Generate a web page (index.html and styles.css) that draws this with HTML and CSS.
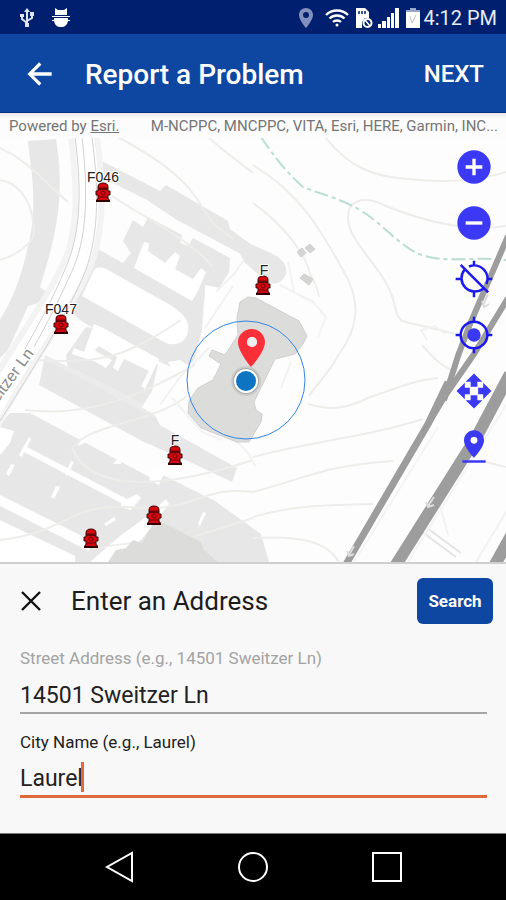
FILE: index.html
```
<!DOCTYPE html>
<html lang="en">
<head>
    <meta charset="UTF-8">
    <meta name="viewport" content="width=device-width, initial-scale=1.0">
    <title>Report a Problem</title>
    <link rel="stylesheet" href="styles.css">
</head>
<body>
    <div class="status-bar">
        <div class="status-group notifications">
            <svg width="14" height="20" viewBox="0 0 14 20" fill="none" stroke="#dfe4f5" stroke-width="2">
                <path d="M7 3v13M2 8v3l5 4M12 6v4l-5 3"/>
                <path d="M4 4l3-4 3 4zM5 15h4v4H5zM0 6h4v3H0zM10 4h4v4h-4z" fill="#dfe4f5" stroke="none"/>
            </svg>
            <svg width="20" height="20" viewBox="0 0 20 20" fill="#fff">
                <path d="M4 0l3 2h6l3-2v7H4zM1 8h18v1H1zM3 10h14v2h2v1h-2c-1 4-3 6-7 6s-6-2-7-6H1v-1h2z"/>
            </svg>
        </div>
        <div class="status-group">
            <svg class="location" width="14" height="20" viewBox="0 0 14 20" fill="#8290bd">
                <path fill-rule="evenodd" d="M7 0C3 0 0 3 0 7c0 5 7 13 7 13s7-8 7-13c0-4-3-7-7-7zm0 4a3 3 0 1 1 0 6 3 3 0 0 1 0-6z"/>
            </svg>
            <svg class="wifi" width="24" height="18" viewBox="0 0 24 18" fill="none" stroke="#fff" stroke-width="2.4">
                <path d="M1 6C7 0 17 0 23 6M4.500 9.500c4-4 11-4 15 0M8 13c2-2 6-2 8 0"/>
                <circle cx="12" cy="16" r="1.500" fill="#fff" stroke="none"/>
            </svg>
            <svg class="sim" width="17" height="20" viewBox="0 0 17 20">
                <path fill="#fff" d="M0 0h9l4 4v6H9l-3 4v6H0z"/>
                <path stroke="#00206f" stroke-width="1.500" d="M3 3v3M6 3v3M9 3v3"/>
                <circle cx="11.500" cy="15" r="4" fill="none" stroke="#fff" stroke-width="2"/>
                <path stroke="#fff" stroke-width="1.500" d="M9 12l5 6"/>
            </svg>
            <svg class="signal" width="21" height="20" viewBox="0 0 21 20" fill="#fff">
                <path d="M0 16h3v4H0zM4 13h4v7H4zM9 9h3v11H9zM13 5h3v15h-3zM17 0h4v20h-4z"/>
            </svg>
            <svg class="battery" width="14" height="20" viewBox="0 0 14 20">
                <path fill="#9aa6cc" d="M4 0h6v2h4v3H0V2h4z"/>
                <path fill="#fff" d="M0 4h14v16H0z"/>
                <path fill="none" stroke="#c9c4b8" d="M4 8l2 7 4-8"/>
            </svg>
            <span class="clock">4:12 PM</span>
        </div>
    </div>

    <header class="app-bar">
        <button class="back-btn" aria-label="Back">
            <svg width="40" height="40" viewBox="0 0 24 24" fill="#fff">
                <path d="M19 11H8.200l4.600-4.600L11.500 5l-7 7 7 7 1.300-1.400L8.200 13H19z"/>
            </svg>
        </button>
        <h1>Report a Problem</h1>
        <button class="next-btn">NEXT</button>
    </header>

    <main class="map">
        <svg class="map-canvas" viewBox="0 113 506 449" preserveAspectRatio="xMidYMin slice">
            <defs>
                <g id="hydrant">
                    <path fill="#d5070f" stroke="#3b0a0a" d="M-5-5c0-3 2-4 5-4s5 1 5 4v2H-5zM-7-1h2v-2H5v2h2v4H5v4h1v2H-6V7h1V3h-2z"/>
                    <path stroke="#300" stroke-width="2" d="M-7 9H7"/>
                    <path stroke="#6d0508" d="M-5-4H5M-5 5H5"/>
                    <circle cy="1" r="2" fill="none" stroke="#6d0508"/>
                </g>
            </defs>

            <!-- parking lots and side roads -->
            <g fill="#e7e7e7">
                <path d="M28 141l28-2c4 26 6 52 0 86-4 24-10 42-16 62l8 6-10 10-10 3-20 44-8 8v-38c16-26 24-52 31-88 5-30 1-60-3-89z"/>
                <path d="M100 160l60 31 6-6 62 36 2 8 23 17v12l-7 4-7-9-62-33-30-20-44-22z"/>
                <path d="M90 254l6-6 27 15 8-10-8-12 10-21 10 7 5-10 34 18-2 8 8 3 5-8 37 20-1 14-12 20-13 8-2 30-8 30-12 12-70-32-32-20-8-8 14-38z"/>
                <path d="M45 355l60 31 50 29 5 10 77 43-5 14-42-20-46-20-105-57z"/>
                <path d="M66 355l20-28 14 2 58 36-6 26-10 16-40-20-34-18z"/>
                <path d="M10 413h20l125 67 6-6 54 27 46 33 8 28H0V425z"/>
                <path d="M237 238l38 17c9 5 14 14 10 21-4 8-12 9-18 6l-24-21z"/>
            </g>
            <g fill="#fff">
                <path d="M134 268l10-26 5 1-1 8 17 12 10-11 5 4-5 13 18 10 8-11 5 4-8 19-6 10z"/>
                <path d="M82 296l12-26c4-4 8-3 14 0l64 36c12 8 18 16 16 26-3 12-14 14-22 11z"/>
                <path d="M84 352l10-28 6 2-10 22 22 12-6 8-10-6-24-8 2-6z"/>
                <path d="M97 329c3-3 5-2 8 0l54 30-14 30-4-3 8-15-25-12-6 12-5-3 4-11-18-11-8 8-3-4z"/>
                <path d="M205 285l15 3-6 28-10 14zM168 362l12-2 12 8-14 24-10-4 6-16z"/>
                <path d="M42 358l6-2 62 30 48 26-4 6-50-28z" opacity=".2"/>
                <path d="M19 455l10-18 2 2-4 8 100 52 10-5 4 4-10 12-10-3v-4l-97-51-2 5z"/>
                <path d="M65 474l6-13 3 1-7 14zM51 497l5-11 4 1-6 12zM6 474l5-10 4 1-6 11zM104 524l10-7 2 3-10 6z"/>
                <path d="M0 495l80 40 10 8-1 8-89-45z"/>
                <path d="M0 520l75 36v6H0zM90 562l30-26 30-22 16-15 3 5-27 35-22 18-4 5zM0 427l14 4-4 12-10 12zM149 480l6-14 10 5-6 14zM77 446l7-10 1 7zM113 464l7-8 1 8zM198 524l5-12 3 1-6 13z"/>
            </g>

            <!-- contour lines -->
            <g fill="none" stroke="#efede9" stroke-width="2">
                <path d="M0 148c30 14 40 30 68 54M0 180c24 4 34 30 34 52 0 12-20 24-34 28M118 137c40 22 70 42 85 72 10 16 20 22 30 30M112 196c30 20 80 45 100 70M208 137c18 16 30 24 45 36"/>
                <path d="M325 137c24 30 48 40 84 42 34 4 70 2 97-7M253 165c50 30 70 70 90 105 20 34 14 60-4 84-8 16-22 30-30 42M253 203c30 22 48 46 56 66 0 10 8 12 10 28M348 216c0-14 14-22 38-10 40 16 80 26 120 20M348 216c-2 24 34 50 44 80 5 16 4 24 14 26l50 12"/>
                <path d="M308 404c20 6 36 6 60-6 24-8 46-18 70-20M253 457c60-16 114-20 170-38M253 492c60-16 70-26 140-31M253 517c40-12 76-12 120-13M253 538c38-2 72 0 86 24M422 345c14 16 22 24 40 28M486 462l20 5"/>
                <path d="M36 360c70 4 90-4 145-40M25 410c70 8 120-18 170-45M72 448c20-26 80-24 115-52M72 448c18 44 90 42 181 12M0 540c70-8 70-40 140-32 60 2 60-22 113-16M100 548c40-10 60 0 90-10l63-20"/>
            </g>
            <path fill="none" stroke="#f2f2f2" stroke-width="2" d="M253 288l12-18M216 292l18-18 10-14M205 328l28-42M160 405l20-28 30-30M172 398l30 34 20 8M195 420c30 16 50 20 60 46M280 285l34 18 12 14-8 20M288 262l6 30 20 10M291 362l-10 26M427 340l-6-10 14-4 10 8M422 520l-14 22M440 505l8 30M506 512l-30 50"/>
            <path fill="none" stroke="#e4e4e4" stroke-width="2" d="M422 532l34 25M427 528l34 25"/>

            <!-- Sweitzer Ln -->
            <g fill="none">
                <path stroke="#f3f3f3" stroke-width="32" d="M84 137c8 60 6 104-10 134-20 44-60 92-88 150"/>
                <path stroke="#fff" stroke-width="20" d="M84 137c8 60 6 104-10 134-20 44-60 92-88 150"/>
                <path stroke="#d2d2d2" d="M75 137c8 60 4 100-9 130-14 34-28 58-41 82M82 137c7 60 4 104-10 134-16 36-26 54-38 76M92 137c8 60 6 104-9 140-20 44-40 76-83 144"/>
            </g>
            <text class="street-label" transform="translate(-15 421) rotate(-54)">Sweitzer Ln</text>

            <!-- creek -->
            <path fill="none" stroke="#b9ddd3" stroke-width="2" stroke-dasharray="14 4 4 4" d="M261 137c12 18 24 34 42 50 20 8 40 12 60 25 20 12 34 32 56 42 24 10 56 2 87 6"/>

            <!-- highway -->
            <g fill="none" stroke="#9d9d9d">
                <path stroke-width="6" d="M508 236l-38 88-12 32-14 44"/>
                <path stroke-width="6" d="M508 298l-34 56-29 42-18 30"/>
                <path stroke-width="7" d="M448 382l-20 42-83 142"/>
                <path stroke-width="12" d="M510 374l-34 64-82 130"/>
                <path stroke-width="12" d="M512 534l-20 36"/>
                <path stroke="#f4f4f4" stroke-width="2" d="M438 427l-84 135M506 405l-98 157"/>
            </g>
            <g fill="none" stroke="#dcdcdc" stroke-width="2">
                <path d="M434 497l-6 9M426 502l2 5 6-2M354 546l-5 9M347 551l2 5 5-2M488 294l-5 12M482 301l2 6 5-3"/>
            </g>

            <!-- buildings -->
            <g fill="#dcdddb" stroke="#cfcfcf">
                <path d="M240 302l8-5 8 1 43 23 8 15-4 8-8 10-20 5-21 43 2 8 6 4-1 8-12 20-12 0-36-14-13-15 1-12 9-13 15-8 8-16-12-8 3-6 13 5 13-20-1-17z"/>
                <path stroke="none" d="M108 562l8-12 10-2 7-8 9 3 14-24 45 23 3 8 14 12z"/>
                <path fill="#d4d4d2" d="M297 252l5-4 4 5-5 4zM305 248l5-4 5 5-5 4zM300 278l4-4 9 5-4 6z"/>
            </g>

            <g class="hydrants">
                <use href="#hydrant" x="103" y="192"/>
                <use href="#hydrant" x="61" y="324"/>
                <use href="#hydrant" x="263" y="285"/>
                <use href="#hydrant" x="175" y="455"/>
                <use href="#hydrant" x="154" y="515"/>
                <use href="#hydrant" x="91" y="538"/>
            </g>
            <g class="hydrant-label">
                <text x="103" y="182">F046</text>
                <text x="61" y="314">F047</text>
                <text x="264" y="275">F</text>
                <text x="175" y="445">F</text>
            </g>

            <!-- current position -->
            <circle cx="246" cy="380" r="59" fill="none" stroke="#3385e6"/>
            <circle cx="246" cy="381" r="15" fill="#000" opacity=".08"/>
            <circle cx="246" cy="381" r="13" fill="#000" opacity=".16"/>
            <circle cx="246" cy="381" r="11" fill="#0d74c2" stroke="#fff" stroke-width="2"/>
            <path fill="#fa2f38" fill-rule="evenodd" d="M252 329c-8 0-14 6-14 13 0 10 13 25 13 25s14-15 14-25c0-7-6-13-13-13zm0 8a5 5 0 1 1 0 10 5 5 0 0 1 0-10z"/>
            <circle cx="252" cy="342" r="5" fill="#eee"/>
        </svg>

        <div class="attribution">
            <span>Powered by <a href="#">Esri.</a></span>
            <span class="sources">M-NCPPC, MNCPPC, VITA, Esri, HERE, Garmin, INC...</span>
        </div>

        <div class="map-controls">
            <button aria-label="Zoom in">
                <svg viewBox="0 0 24 24"><circle cx="12" cy="12" r="10"/><path d="M12 7v10M7 12h10" stroke="#fff" stroke-width="2"/></svg>
            </button>
            <button aria-label="Zoom out">
                <svg viewBox="0 0 24 24"><circle cx="12" cy="12" r="10"/><path d="M7 12h10" stroke="#fff" stroke-width="2"/></svg>
            </button>
            <button aria-label="Location off">
                <svg class="outline" viewBox="0 0 24 24"><path d="M9 4.500A8 8 0 0 1 19.500 15M17.500 17.800A8 8 0 0 1 6.300 6.500M4 3.500l16.500 16.500M12 1v3M12 20v3M1 12h3M20 12h3"/></svg>
            </button>
            <button aria-label="My location">
                <svg class="outline" viewBox="0 0 24 24"><circle cx="12" cy="12" r="8"/><path d="M12 1v3M12 20v3M1 12h3M20 12h3"/><circle class="dot" cx="12" cy="12" r="4"/></svg>
            </button>
            <button aria-label="Pan">
                <svg viewBox="0 0 24 24"><path d="M12 1.500l5 5h-3v3h-4v-3H7zM12 22.500l5-5h-3v-3h-4v3H7zM1.500 12l5-5v3h3v4h-3v3zM22.500 12l-5-5v3h-3v4h3v3z"/></svg>
            </button>
            <button aria-label="Drop pin">
                <svg viewBox="0 0 24 24"><path fill-rule="evenodd" d="M18 8c0-3.300-2.700-6-6-6S6 4.700 6 8c0 4.500 6 10.500 6 10.500S18 12.500 18 8zm-8 0a2 2 0 1 1 4 0 2 2 0 0 1-4 0zM5 20h14v1.500H5z"/><circle cx="12" cy="8" r="2" fill="#fff"/></svg>
            </button>
        </div>
    </main>

    <form class="address-panel">
        <div class="panel-header">
            <button type="button" class="close-btn" aria-label="Close">
                <svg width="22" height="22" viewBox="0 0 22 22" fill="none" stroke="#111" stroke-width="2.4">
                    <path d="M2 2l18 18M20 2L2 20"/>
                </svg>
            </button>
            <h2>Enter an Address</h2>
            <button type="button" class="search-btn">Search</button>
        </div>
        <div class="field">
            <label for="street">Street Address (e.g., 14501 Sweitzer Ln)</label>
            <input type="text" id="street" value="14501 Sweitzer Ln">
        </div>
        <div class="field active">
            <label for="city">City Name (e.g., Laurel)</label>
            <input type="text" id="city" value="Laurel">
            <span class="caret"></span>
        </div>
    </form>

    <nav class="nav-bar">
        <button aria-label="Back">
            <svg width="32" height="32" viewBox="0 0 32 32"><path d="M29 2v28L4 16z"/></svg>
        </button>
        <button aria-label="Home">
            <svg width="32" height="32" viewBox="0 0 32 32"><circle cx="16" cy="16" r="14"/></svg>
        </button>
        <button aria-label="Recent apps">
            <svg width="32" height="32" viewBox="0 0 32 32"><path d="M2 2h28v28H2z"/></svg>
        </button>
    </nav>
</body>
</html>
```
FILE: styles.css
```
* {
    box-sizing: border-box;
}

body {
    margin: 0;
    min-height: 100vh;
    display: flex;
    flex-direction: column;
    font-family: Roboto, Arial, sans-serif;
    background-color: #f8f8f8;
}

button {
    padding: 0;
    border: none;
    background: none;
    font-family: inherit;
    cursor: pointer;
}

svg {
    display: block;
}

h1, h2 {
    margin: 0;
}

.status-bar {
    display: flex;
    justify-content: space-between;
    align-items: center;
    height: 34px;
    padding: 2px 9px 0 20px;
    background-color: #00206f;
}

.status-group {
    display: flex;
    align-items: center;
}

.notifications {
    gap: 17px;
}

.location {
    margin-right: 12px;
}

.wifi {
    margin-right: 7px;
}

.sim {
    margin-right: 5px;
}

.signal {
    margin-right: 7px;
}

.battery {
    margin-right: 3px;
}

.clock {
    color: #e8ebf7;
    font-size: 20px;
    line-height: 32px;
}

.app-bar {
    display: flex;
    align-items: center;
    height: 79px;
    padding: 2px 22px 0 20px;
    background-color: #0e47a1;
    border-bottom: 1px solid #0a2f86;
    color: #fff;
}

.app-bar h1 {
    flex: 1;
    margin-left: 25px;
    font-size: 28px;
    font-weight: 500;
}

.next-btn {
    color: #fff;
    font-size: 24px;
    font-weight: 500;
}

.map {
    position: relative;
    flex: 1;
    min-height: 360px;
    overflow: hidden;
    background-color: #fdfdfd;
    border-bottom: 2px solid #cfcfcf;
}

.map-canvas {
    position: absolute;
    top: 0;
    left: 0;
    width: 100%;
    height: 100%;
}

.street-label {
    font-family: "Liberation Sans", Arial, sans-serif;
    font-size: 16px;
    fill: #8a8a8a;
}

.hydrant-label {
    font-family: "Liberation Sans", Arial, sans-serif;
    font-size: 14px;
    text-anchor: middle;
    fill: #222;
    stroke: #fff;
    stroke-width: 2px;
    paint-order: stroke;
}

.attribution {
    position: relative;
    display: flex;
    justify-content: space-between;
    padding: 1px 8px 0 9px;
    background: linear-gradient(#e9e9e9, #fcfcfc 6px);
    color: #757575;
    font-size: 15px;
    line-height: 24px;
    white-space: nowrap;
}

.attribution a {
    color: inherit;
}

.map-controls {
    position: absolute;
    top: 34px;
    right: 12px;
    display: flex;
    flex-direction: column;
    gap: 16px;
}

.map-controls button,
.map-controls svg {
    width: 40px;
    height: 40px;
}

.map-controls svg {
    fill: #3b39f6;
}

.map-controls .outline {
    fill: none;
    stroke: #1c19ee;
    stroke-width: 1.5;
}

.map-controls .dot {
    fill: #3b39f6;
    stroke: none;
}

.address-panel {
    padding: 14px 19px 35px 20px;
    background-color: #f8f8f8;
}

.panel-header {
    display: flex;
    align-items: center;
    margin-right: -6px;
    margin-bottom: 22px;
}

.panel-header h2 {
    flex: 1;
    margin-left: 29px;
    color: #1c1c1c;
    font-size: 26px;
    font-weight: 400;
}

.search-btn {
    width: 76px;
    height: 46px;
    border-radius: 6px;
    background-color: #0e47a1;
    color: #fff;
    font-size: 17px;
    font-weight: 700;
}

.field {
    position: relative;
    margin-bottom: 16px;
}

.field label {
    display: block;
    color: #a3a3a3;
    font-size: 17px;
    line-height: 24px;
}

.field input {
    display: block;
    width: 100%;
    height: 44px;
    padding: 8px 0 0;
    border: none;
    border-bottom: 2px solid #a5a5a5;
    outline: none;
    background: none;
    color: #222;
    font-family: inherit;
    font-size: 23px;
}

.field.active {
    margin-bottom: 0;
}

.field.active label {
    color: #222;
}

.field.active input {
    border-bottom: 3px solid #e2693a;
}

.caret {
    position: absolute;
    left: 61px;
    bottom: 6px;
    width: 3px;
    height: 30px;
    background-color: #e2693a;
}

.nav-bar {
    display: flex;
    justify-content: center;
    align-items: center;
    gap: 102px;
    height: 67px;
    background-color: #000;
    border-top: 1px solid #777;
}

.nav-bar svg {
    fill: none;
    stroke: #fff;
    stroke-width: 2;
}
```
